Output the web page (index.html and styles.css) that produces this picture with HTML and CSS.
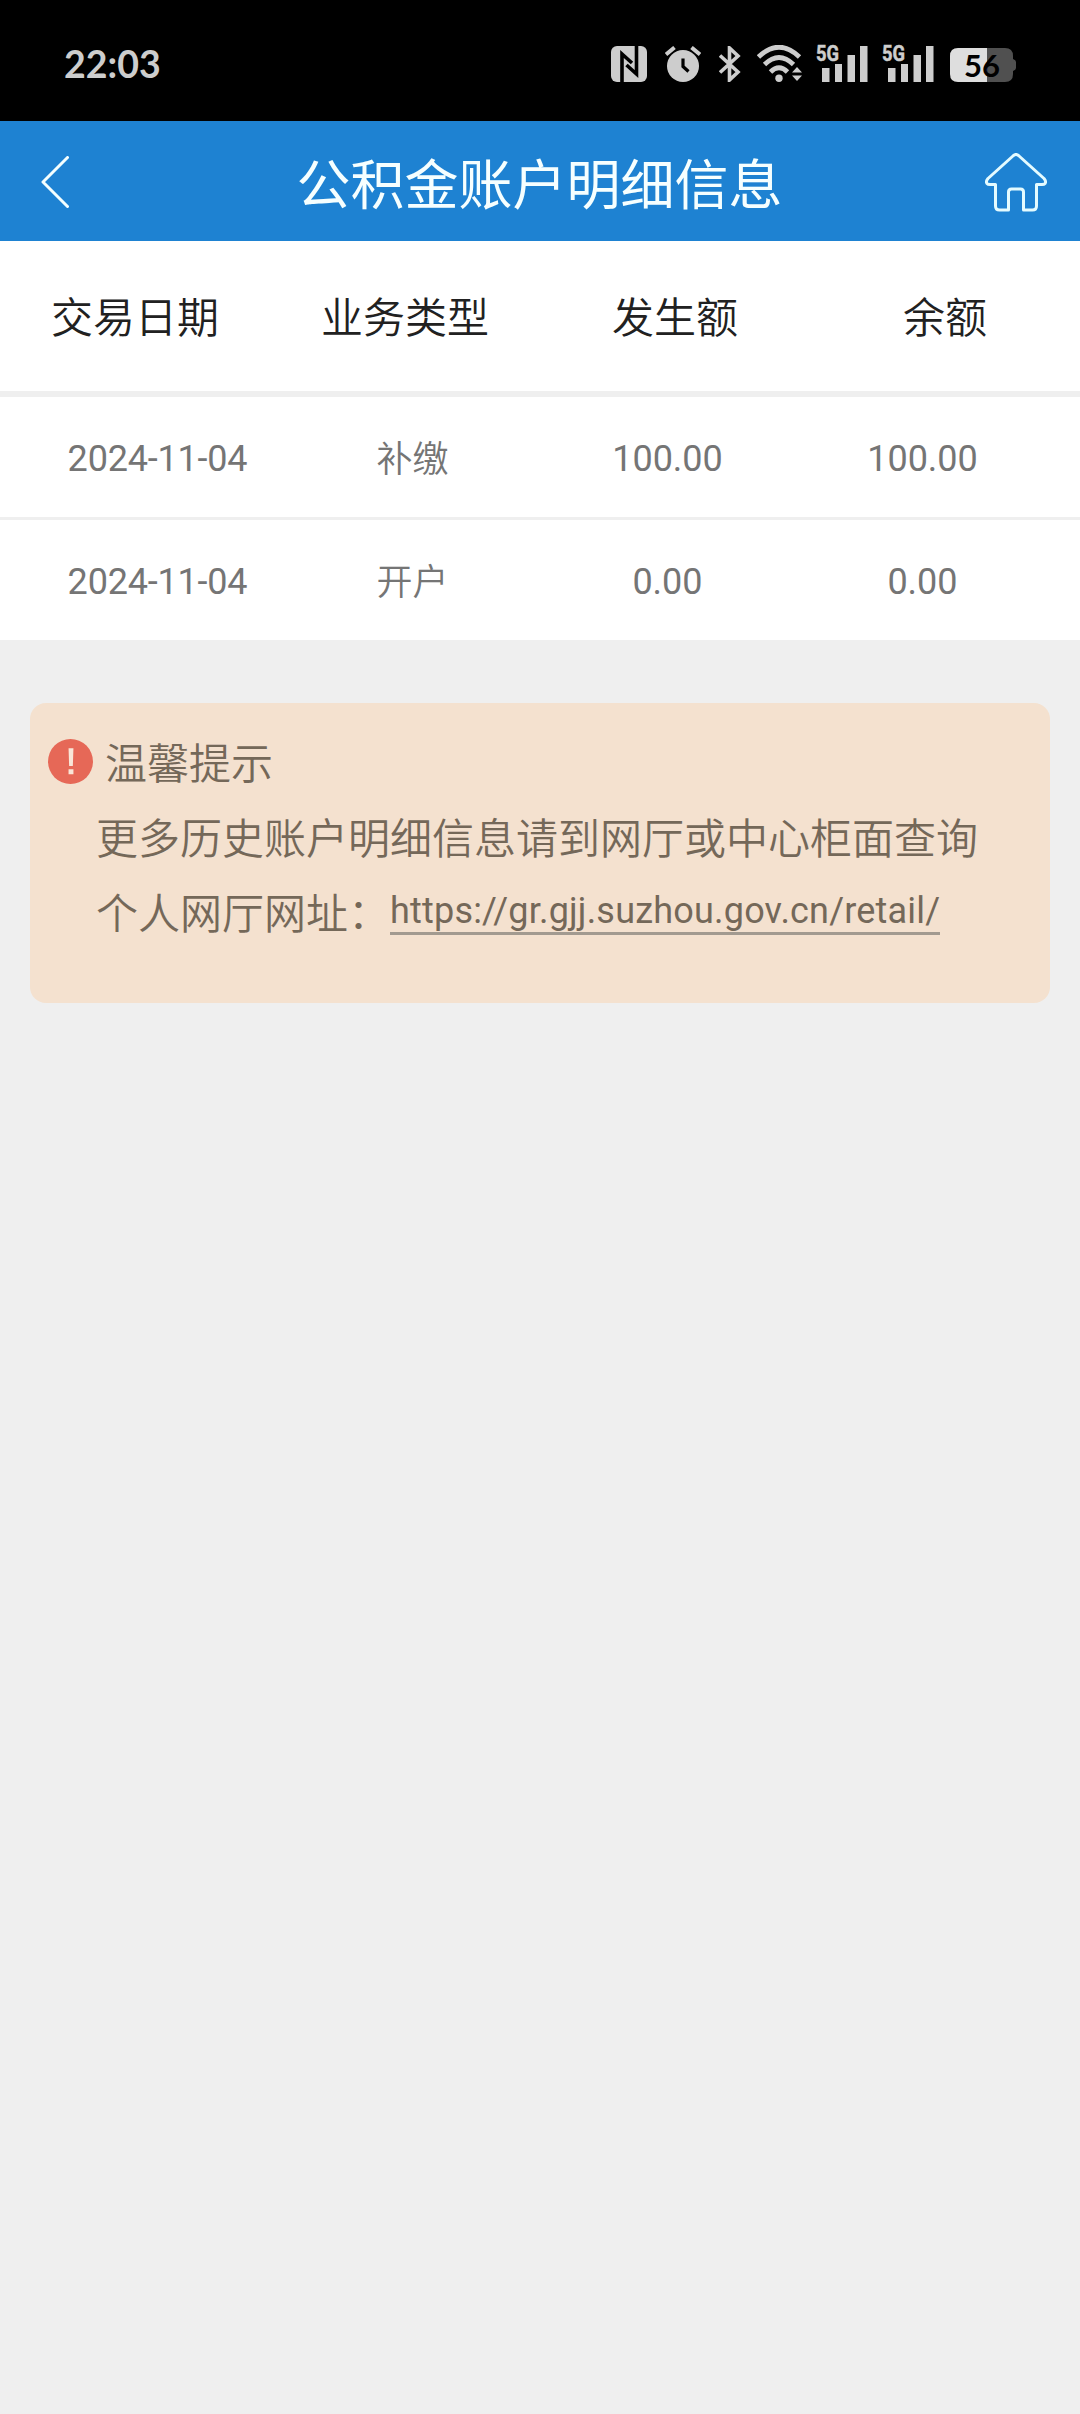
FILE: index.html
```html
<!DOCTYPE html>
<html lang="zh-CN">
<head>
<meta charset="utf-8">
<title>公积金账户明细信息</title>
<link rel="stylesheet" href="styles.css">
</head>
<body>
<div class="status-bar">
  <span class="clock">22:03</span>
  <div class="status-icons">
    <svg class="nfc" width="36" height="36" viewBox="0 0 36 36">
      <rect width="36" height="36" rx="6" fill="#cdcdcd"/>
      <path d="M11 36V8l10 9M25.500 0v28L15.500 19" fill="none" stroke="#000" stroke-width="3.600"/>
    </svg>
    <svg class="alarm" width="36" height="36" viewBox="0 0 36 36">
      <circle cx="18" cy="20" r="16" fill="#cdcdcd"/>
      <path d="M1 8.500l8.500-7M35 8.500l-8.500-7" stroke="#cdcdcd" stroke-width="4"/>
      <path d="M18 12.500v8l5.500 5" fill="none" stroke="#000" stroke-width="3.200"/>
    </svg>
    <svg class="bluetooth" width="22" height="36" viewBox="0 0 22 36">
      <path d="M1 9.500l18 16.500-8.500 8V2l8.500 8L1 26.500" fill="none" stroke="#cdcdcd" stroke-width="3.600"/>
    </svg>
    <svg class="wifi" width="46" height="37" viewBox="0 0 46 37">
      <g fill="none" stroke="#cdcdcd" stroke-width="4.800">
        <path d="M1.500 12Q22 -7.500 42.500 12"/>
        <path d="M7.500 19.500Q22 5.500 36.500 19.500"/>
        <path d="M13.500 27Q22 18.500 30.500 27"/>
      </g>
      <circle cx="22" cy="33.300" r="3.700" fill="#cdcdcd"/>
      <path d="M35 27.500l5-5.500 5 5.500zM35 30.500h10l-5 5.500z" fill="#cdcdcd"/>
    </svg>
    <svg class="signal" width="52" height="44" viewBox="0 -6 52 44">
      <text class="network" x="0" y="16.800" textLength="23" lengthAdjust="spacingAndGlyphs">5G</text>
      <path d="M6 24h7.500v14H6zM19 20h7v18h-7zM31.500 11H39v27h-7.500zM44 2h7.500v36H44z" fill="#cdcdcd"/>
    </svg>
    <svg class="signal" width="52" height="44" viewBox="0 -6 52 44">
      <text class="network" x="0" y="16.800" textLength="23" lengthAdjust="spacingAndGlyphs">5G</text>
      <path d="M6 24h7.500v14H6zM19 20h7v18h-7zM31.500 11H39v27h-7.500zM44 2h7.500v36H44z" fill="#cdcdcd"/>
    </svg>
    <svg class="battery" width="66" height="42" viewBox="0 -4 66 42">
      <path d="M37 0h18q8 0 8 8v3q3 1 3 3v6q0 2-3 3v3q0 8-8 8H37z" fill="#505050"/>
      <path d="M37 0H8Q0 0 0 8v18q0 8 8 8h29z" fill="#dedede"/>
      <text class="level" x="32" y="28.500" text-anchor="middle">56</text>
    </svg>
  </div>
</div>

<header class="nav">
  <svg class="back" width="28" height="52" viewBox="0 0 28 52">
    <path d="M26.500 1.500L2 26l24.500 24.500" fill="none" stroke="#f4ffff" stroke-width="3" stroke-linecap="round" stroke-linejoin="round"/>
  </svg>
  <h1 class="title">公积金账户明细信息</h1>
  <svg class="home" width="62" height="59" viewBox="0 0 62 59">
    <path d="M28.500 2.500q2.500-2 5 0L59 25.500q2.500 3 1 5-.8 1-3 1h-5.500V53q0 4-4 4h-9V39q0-3-3-3h-9q-3 0-3 3v18h-9q-4 0-4-4V31.500H5q-2.200 0-3-1-1.500-2 1-5z" fill="none" stroke="#e4fbff" stroke-width="3" stroke-linejoin="round"/>
  </svg>
</header>

<main>
  <section class="records">
    <div class="record-head">
      <span>交易日期</span><span>业务类型</span><span>发生额</span><span>余额</span>
    </div>
    <div class="record">
      <span class="date">2024-11-04</span><span class="kind">补缴</span><span>100.00</span><span>100.00</span>
    </div>
    <div class="record">
      <span class="date">2024-11-04</span><span class="kind">开户</span><span>0.00</span><span>0.00</span>
    </div>
  </section>

  <section class="notice">
    <div class="notice-title">
      <svg class="alert" width="45" height="45" viewBox="0 0 46 46">
        <circle cx="23" cy="23" r="23" fill="#e66857"/>
        <path d="M21 9.500h5l-.6 18h-3.800zM21 31h5v5h-5z" fill="#f9e6d8"/>
      </svg>
      <span>温馨提示</span>
    </div>
    <p class="notice-line">更多历史账户明细信息请到网厅或中心柜面查询</p>
    <p class="notice-line">个人网厅网址：<a class="link">https://gr.gjj.suzhou.gov.cn/retail/</a></p>
  </section>
</main>
</body>
</html>
```

FILE: styles.css
```css
* {
  box-sizing: border-box;
}

body {
  margin: 0;
  min-height: 2414px;
  background: #efefef;
  color: #212121;
  font-family: Roboto, "Noto Sans CJK SC", sans-serif;
}

.status-bar {
  display: flex;
  align-items: center;
  justify-content: space-between;
  height: 121px;
  padding: 7px 64px 0;
  background: #000;
}

.clock {
  color: #cdcdcd;
  font: 700 37.5px/44px Lato, sans-serif;
}

.status-icons {
  display: flex;
  align-items: flex-end;
  height: 52px;
  padding-bottom: 8px;
}

.alarm,
.bluetooth {
  margin-left: 18px;
}

.wifi {
  margin-left: 16px;
}

.signal {
  margin-left: 14px;
}

.wifi + .signal {
  margin-left: 13px;
}

.battery {
  margin: 0 0 -4px 16px;
}

.network {
  fill: #cdcdcd;
  stroke: #cdcdcd;
  stroke-width: 0.5px;
  font: 700 22px Roboto, sans-serif;
}

.level {
  fill: #000;
  font: 700 31px Lato, sans-serif;
}

.nav {
  display: flex;
  align-items: center;
  justify-content: space-between;
  height: 120px;
  padding: 2px 33px 0 41px;
  background: #1e82d2;
}

.back {
  margin-right: 25px;
}

.title {
  margin: 0;
  padding-top: 9px;
  color: #f6ffff;
  font-size: 54px;
  font-weight: 400;
  line-height: 80px;
}

.record-head,
.record {
  display: grid;
  grid-template-columns: repeat(4, 1fr);
  align-items: center;
  background: #fff;
  text-align: center;
}

.record-head {
  height: 156px;
  padding-top: 5px;
  border-bottom: 6px solid #efefef;
  font-size: 42px;
  font-weight: 350;
  line-height: 60px;
}

.record {
  height: 120px;
  padding: 3px 30px 0;
  color: #757575;
  font-size: 36px;
  line-height: 42px;
}

.record + .record {
  height: 123px;
  border-top: 3px solid #efefef;
}

.date {
  letter-spacing: -0.2px;
}

.kind {
  padding-top: 2px;
  font-weight: 350;
}

.notice {
  height: 300px;
  margin: 63px 30px 0;
  padding: 24px 18px 0;
  border-radius: 16px;
  background: #f4e1cf;
  color: #746859;
  font-size: 42px;
  font-weight: 350;
  line-height: 75px;
}

.notice-title {
  display: flex;
  align-items: center;
  gap: 12px;
}

.alert {
  margin-bottom: 6px;
}

.notice-line {
  height: 75px;
  margin: 0 0 0 48px;
  white-space: nowrap;
}

.link {
  display: inline-block;
  border-bottom: 3px solid #a29a90;
  font-size: 36px;
  font-weight: 400;
  letter-spacing: 0.2px;
  line-height: 42px;
  vertical-align: 6px;
}
```
